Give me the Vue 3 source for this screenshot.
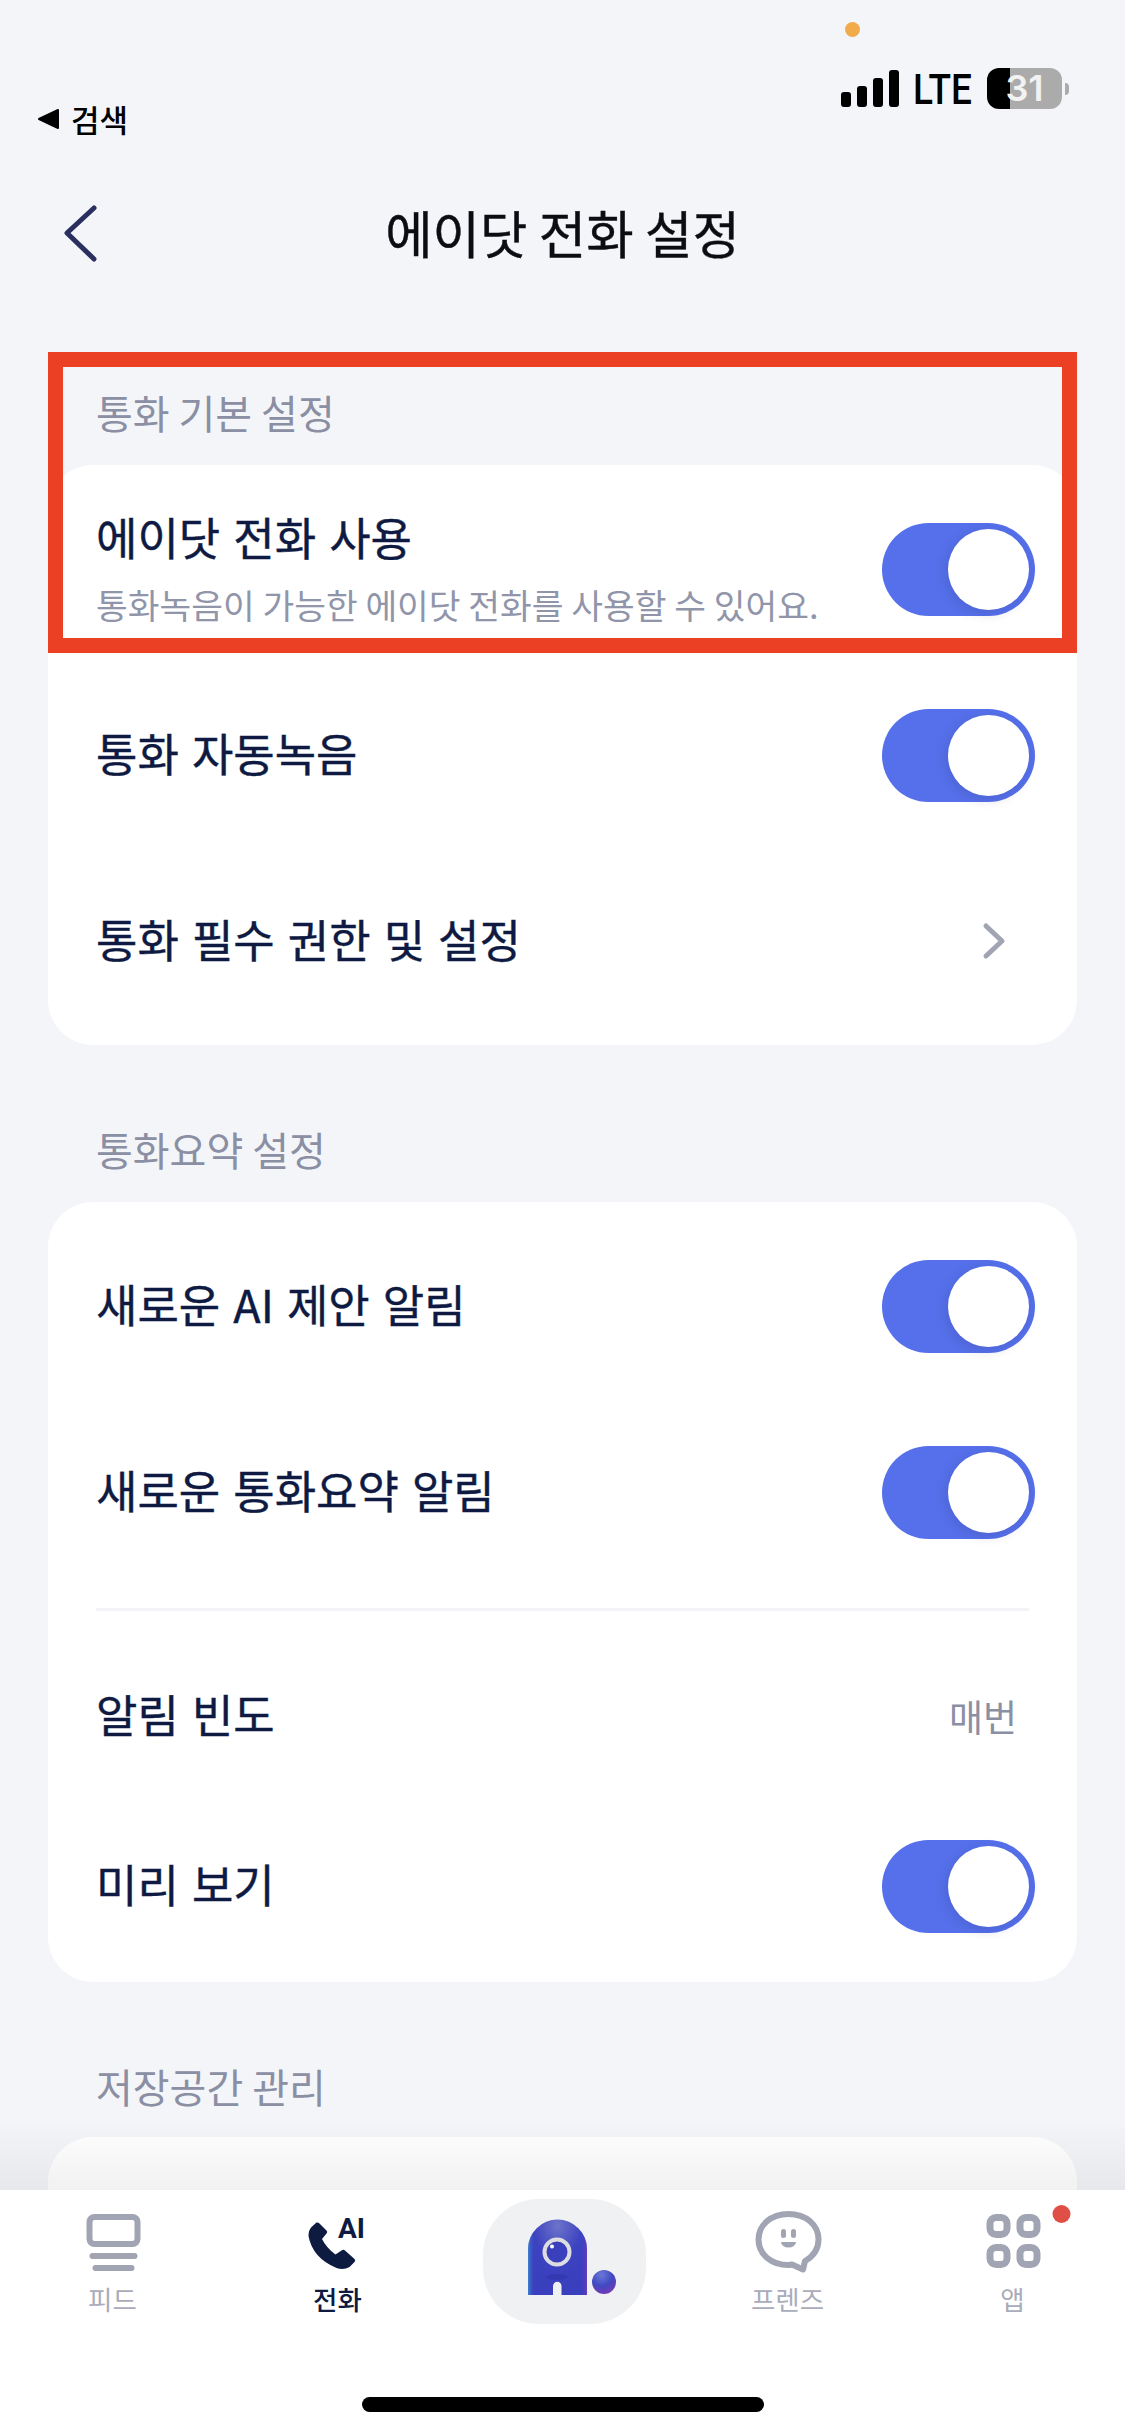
<script setup>
const groups = [
  {
    title: '통화 기본 설정',
    rows: [
      { label: '에이닷 전화 사용', sub: '통화녹음이 가능한 에이닷 전화를 사용할 수 있어요.', type: 'toggle' },
      { label: '통화 자동녹음', type: 'toggle' },
      { label: '통화 필수 권한 및 설정', type: 'link' },
    ],
  },
  {
    title: '통화요약 설정',
    rows: [
      { label: '새로운 AI 제안 알림', type: 'toggle' },
      { label: '새로운 통화요약 알림', type: 'toggle' },
      { divider: true },
      { label: '알림 빈도', type: 'value', value: '매번', short: true },
      { label: '미리 보기', type: 'toggle', short: true },
    ],
  },
  { title: '저장공간 관리', rows: [] },
]

const signalBars = [15, 21, 29, 37]
</script>

<template>
  <div class="page">
    <div class="status">
      <span class="mic-dot"></span>
      <div class="back-app">
        <svg width="23" height="22" viewBox="0 0 23 22">
          <path d="M21 2 V20 L2 11 Z" fill="#000" stroke="#000" stroke-width="2" stroke-linejoin="round" />
        </svg>
        <span>검색</span>
      </div>
      <div class="indicators">
        <div class="signal">
          <i v-for="h in signalBars" :key="h" :style="{ height: h + 'px' }"></i>
        </div>
        <span class="lte">LTE</span>
        <div class="battery">31</div>
        <span class="battery-nub"></span>
      </div>
    </div>

    <header class="topbar">
      <svg class="back" width="36" height="58" viewBox="0 0 36 58">
        <path d="M32 3 L5 28 L32 54" fill="none" stroke="#2b2f5f" stroke-width="5" stroke-linecap="round" stroke-linejoin="round" />
      </svg>
      <h1>에이닷 전화 설정</h1>
    </header>

    <main class="content">
      <section v-for="(group, i) in groups" :key="group.title" class="group">
        <div v-if="i === 0" class="highlight"></div>
        <h2>{{ group.title }}</h2>
        <div class="card">
          <template v-for="(row, j) in group.rows" :key="j">
            <div v-if="row.divider" class="divider"></div>
            <div v-else class="row" :class="{ short: row.short }">
              <div class="row-text">
                <div class="label">{{ row.label }}</div>
                <div v-if="row.sub" class="sub">{{ row.sub }}</div>
              </div>
              <span v-if="row.type === 'toggle'" class="toggle"><i></i></span>
              <span v-else-if="row.type === 'value'" class="value">{{ row.value }}</span>
              <svg v-else class="chevron" width="24" height="38" viewBox="0 0 24 38">
                <path d="M4 4 L20 19 L4 34" fill="none" stroke="#a1a4b3" stroke-width="5" stroke-linecap="round" stroke-linejoin="round" />
              </svg>
            </div>
          </template>
        </div>
      </section>
      <div class="fade"></div>
    </main>

    <nav class="nav">
      <div class="tabs">
        <div class="tab">
          <svg class="tab-icon" viewBox="0 0 80 66">
            <rect x="16.5" y="7" width="48" height="27" rx="5" fill="none" stroke="#a1a4b3" stroke-width="6" />
            <rect x="16.5" y="43" width="48" height="6" rx="3" fill="#a1a4b3" />
            <rect x="19.5" y="55" width="42" height="6" rx="3" fill="#a1a4b3" />
          </svg>
          <span>피드</span>
        </div>
        <div class="tab active">
          <svg class="tab-icon" viewBox="0 0 80 66">
            <path transform="translate(10.5 12)" d="M8 0.5 Q9.5 0 11 1.5 L18 8.5 Q19.5 10 18 11.5 L13.5 17 Q18 26 27 32.5 L33 28.5 Q35 27 36.5 28.5 L46 37 Q47.5 38.5 46 40 L41 45 Q35 48.5 28 46 Q4 36 0 14 Q0 8 3 5 Z" fill="#0e1b41" />
            <text x="40" y="28" class="ai">AI</text>
          </svg>
          <span>전화</span>
        </div>
        <div class="tab center">
          <div class="pill">
            <svg width="163" height="125" viewBox="0 0 163 125">
              <defs>
                <radialGradient id="bodyGrad" cx="50%" cy="8%" r="75%">
                  <stop offset="0" stop-color="#6d74c9" />
                  <stop offset="0.55" stop-color="#3c43c0" />
                  <stop offset="1" stop-color="#3a3fbe" />
                </radialGradient>
                <linearGradient id="edgeGrad" x1="0" x2="1" y1="0" y2="0">
                  <stop offset="0" stop-color="#3fa0d8" stop-opacity="0.7" />
                  <stop offset="0.12" stop-color="#3c43c0" stop-opacity="0" />
                  <stop offset="0.88" stop-color="#3c43c0" stop-opacity="0" />
                  <stop offset="1" stop-color="#7a38b8" stop-opacity="0.7" />
                </linearGradient>
                <radialGradient id="ballGrad" cx="40%" cy="20%" r="85%">
                  <stop offset="0" stop-color="#6b78d6" />
                  <stop offset="0.55" stop-color="#4148c2" />
                  <stop offset="1" stop-color="#7a3ab6" />
                </radialGradient>
              </defs>
              <path d="M45 96 V50 A29.5 29.5 0 0 1 104 50 V96 H78.5 V87 A4.25 4.25 0 0 0 70 87 V96 Z" fill="url(#bodyGrad)" />
              <path d="M45 96 V50 A29.5 29.5 0 0 1 104 50 V96 H78.5 V87 A4.25 4.25 0 0 0 70 87 V96 Z" fill="url(#edgeGrad)" />
              <ellipse cx="74" cy="78" rx="11" ry="3" fill="#3036aa" opacity="0.6" />
              <circle cx="74" cy="53" r="12.5" fill="#3a40bb" stroke="#dddde2" stroke-width="4" />
              <circle cx="69" cy="47.5" r="2" fill="#fff" />
              <circle cx="121" cy="83" r="12" fill="url(#ballGrad)" />
            </svg>
          </div>
        </div>
        <div class="tab">
          <svg class="tab-icon" viewBox="0 0 80 66">
            <path d="M40.5 4 C58 4 70.5 15 70.5 29.5 C70.5 39 65 46.5 57 51 L55 59.5 L44 54.5 Q42 55 40.5 55 C23 55 10.5 44 10.5 29.5 C10.5 15 23 4 40.5 4 Z" fill="none" stroke="#a1a4b3" stroke-width="6" stroke-linejoin="round" />
            <rect x="33" y="19" width="5" height="9" rx="2.5" fill="#a1a4b3" />
            <rect x="43" y="19" width="5" height="9" rx="2.5" fill="#a1a4b3" />
            <path d="M33 32 H48 A7.5 5.5 0 0 1 33 32 Z" fill="#a1a4b3" />
          </svg>
          <span>프렌즈</span>
        </div>
        <div class="tab">
          <svg class="tab-icon" viewBox="0 0 80 66">
            <g fill="none" stroke="#a1a4b3" stroke-width="7">
              <rect x="17" y="7.5" width="17" height="17" rx="6" />
              <rect x="47" y="7.5" width="17" height="17" rx="6" />
              <rect x="17" y="37.5" width="17" height="17" rx="6" />
              <rect x="47" y="37.5" width="17" height="17" rx="6" />
            </g>
            <circle cx="88.5" cy="4" r="9" fill="#e04f45" />
          </svg>
          <span>앱</span>
        </div>
      </div>
      <div class="home-bar"></div>
    </nav>
  </div>
</template>

<style scoped>
.page {
  height: 2436px;
  display: flex;
  flex-direction: column;
  background: #f4f5f9;
  font-family: "Noto Sans CJK KR", "Noto Sans", sans-serif;
  overflow: hidden;
}

.status {
  position: relative;
  height: 165px;
  flex: none;
  display: flex;
  justify-content: space-between;
  align-items: flex-start;
  padding: 0 56px 0 37px;
}

.mic-dot {
  position: absolute;
  left: 845px;
  top: 22px;
  width: 15px;
  height: 15px;
  border-radius: 50%;
  background: #f2ab4b;
}

.back-app {
  display: flex;
  align-items: center;
  gap: 11px;
  margin-top: 99px;
  font-size: 31px;
  line-height: 40px;
  font-weight: 500;
  color: #000;
}

.indicators {
  display: flex;
  align-items: flex-start;
  margin-top: 68px;
}

.signal {
  display: flex;
  align-items: flex-end;
  gap: 6px;
  height: 37px;
  margin-top: 2px;
}

.signal i {
  width: 10px;
  border-radius: 3px;
  background: #000;
}

.lte {
  width: 58px;
  margin: 0 16px 0 14px;
  font-family: Roboto, sans-serif;
  font-size: 43px;
  line-height: 42px;
  font-weight: 500;
  color: #000;
  transform: scaleX(0.86);
  transform-origin: left;
  white-space: nowrap;
}

.battery {
  width: 75px;
  height: 41px;
  border-radius: 12px;
  background: linear-gradient(90deg, #000 23px, #ababab 23px);
  color: #f2f2f2;
  font-family: Inter, sans-serif;
  font-size: 36px;
  font-weight: 600;
  line-height: 41px;
  text-align: center;
}

.battery-nub {
  width: 4px;
  height: 12px;
  margin: 15px 0 0 3px;
  border-radius: 0 4px 4px 0;
  background: #ababab;
}

.topbar {
  position: relative;
  flex: none;
  height: 136px;
  display: flex;
  align-items: center;
  justify-content: center;
}

.back {
  position: absolute;
  left: 62px;
  top: 40px;
}

.topbar h1 {
  margin: 0 0 3px;
  font-size: 51.5px;
  line-height: 70px;
  font-weight: 400;
  -webkit-text-stroke: 0.4px #0c0d12;
  color: #0c0d12;
}

.content {
  position: relative;
  flex: 1;
  min-height: 0;
  padding: 81px 48px 0;
  overflow: hidden;
}

.group {
  position: relative;
  margin-bottom: 74px;
}

.highlight {
  position: absolute;
  left: 0;
  right: 0;
  top: -30px;
  height: 301px;
  box-sizing: border-box;
  border: 15px solid #ec4024;
  z-index: 1;
}

.group h2 {
  margin: 0 0 23px 48px;
  font-size: 40px;
  line-height: 60px;
  font-weight: 400;
  color: #8b8fa3;
}

.group:last-of-type h2 {
  margin-bottom: 21px;
}

.card {
  min-height: 200px;
  padding: 11px 0 11px;
  background: #fff;
  border-radius: 45px;
}

.row {
  height: 186px;
  display: flex;
  align-items: center;
  justify-content: space-between;
  padding: 0 42px 0 48px;
}

.row.short {
  height: 170px;
}

.row-text {
  margin-top: -4px;
}

.label {
  font-size: 45px;
  line-height: 60px;
  word-spacing: 3px;
  font-weight: 400;
  -webkit-text-stroke: 0.4px #0e1a42;
  color: #0e1a42;
}

.sub {
  margin-top: 14px;
  font-size: 34.5px;
  line-height: 46px;
  color: #9195a9;
  white-space: nowrap;
}

.toggle {
  width: 153px;
  height: 93px;
  flex: none;
  box-sizing: border-box;
  padding: 6px;
  display: flex;
  justify-content: flex-end;
  border-radius: 47px;
  background: #5570ea;
}

.toggle i {
  width: 81px;
  height: 81px;
  border-radius: 50%;
  background: #fff;
  box-shadow: -2px 3px 12px rgba(50, 50, 120, 0.2);
}

.value {
  margin-right: 18px;
  font-size: 37px;
  line-height: 50px;
  color: #8b8fa3;
}

.chevron {
  margin-right: 29px;
}

.divider {
  height: 3px;
  margin: 23px 48px 20px;
  background: #f4f4f8;
}

.fade {
  position: absolute;
  left: 0;
  right: 0;
  bottom: 0;
  height: 70px;
  background: linear-gradient(rgba(0, 0, 0, 0), rgba(0, 0, 0, 0.055));
  z-index: 2;
}

.nav {
  flex: none;
  height: 246px;
  background: #fff;
}

.tabs {
  height: 207px;
  display: grid;
  grid-template-columns: repeat(5, 1fr);
}

.tab {
  display: flex;
  flex-direction: column;
  align-items: center;
  padding-top: 20px;
  font-size: 26.5px;
  line-height: 36px;
  color: #a9acba;
}

.tab.active {
  color: #0e1a42;
  font-weight: 500;
}

.tab-icon {
  width: 80px;
  height: 66px;
  margin-bottom: 5px;
  overflow: visible;
}

.ai {
  font-family: Roboto, sans-serif;
  font-size: 28px;
  font-weight: 700;
  fill: #0e1b41;
}

.tab.center {
  padding-top: 9px;
}

.pill {
  width: 163px;
  height: 125px;
  margin-left: 4px;
  border-radius: 56px;
  background: #f0f1f3;
}

.pill svg {
  display: block;
}

.home-bar {
  width: 402px;
  height: 15px;
  margin: 0 auto;
  border-radius: 8px;
  background: #000;
}
</style>

<style>
body {
  background: #f4f5f9;
}
</style>
